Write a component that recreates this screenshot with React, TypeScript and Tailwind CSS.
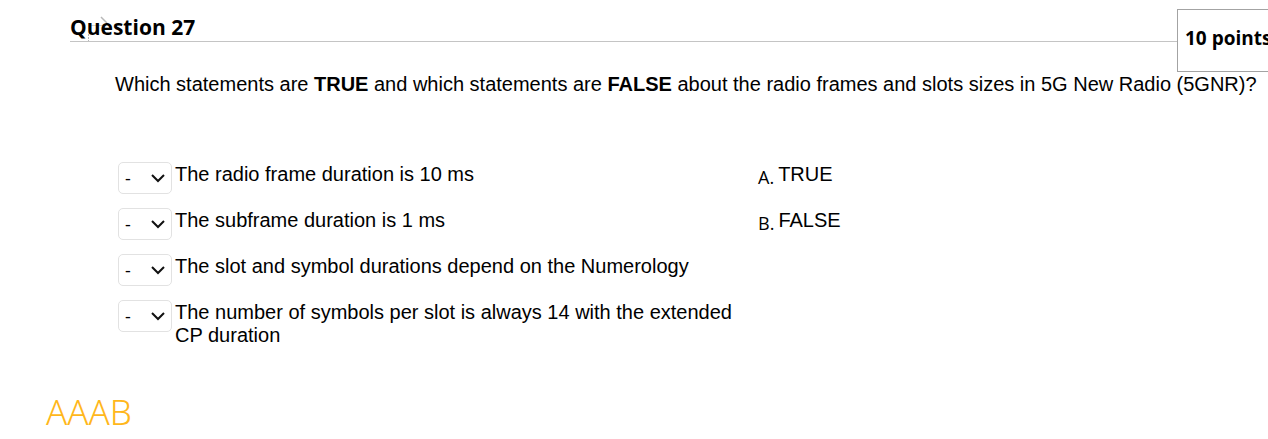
const items = [
  'The radio frame duration is 10 ms',
  'The subframe duration is 1 ms',
  'The slot and symbol durations depend on the Numerology',
  'The number of symbols per slot is always 14 with the extended CP duration',
];
const answers = ['TRUE', 'FALSE'];

export default function App() {
  return (
    <main className="overflow-x-hidden bg-white pb-1 font-['Liberation_Sans',sans-serif] text-[20px] leading-[23px] text-black">
      <header className="relative ml-[70px] h-[42px] border-b border-[#c4c4c4] pt-[14px] font-['Open_Sans',sans-serif] font-bold">
        <svg className="absolute left-4 top-[14px] h-[27px] w-6" viewBox="0 0 24 27" fill="none" stroke="#b8b8b8" aria-hidden="true">
          <path d="M15 3l6 6" strokeWidth="1.5" />
          <path d="M4 11.5h14" stroke="#d4d4d4" />
          <path d="M2.5 20v7" strokeDasharray="2 1" />
        </svg>
        <h2 className="relative text-[21px] leading-[27px]">Question 27</h2>
        <div className="absolute -right-3 top-[9px] flex h-[63px] w-[103px] items-center border border-[#a3a3a3] bg-white pb-1 pl-[7px] text-[19px] whitespace-nowrap">
          10 points
        </div>
      </header>
      <p className="ml-[115px] mt-[31px] whitespace-nowrap">
        Which statements are <b>TRUE</b> and which statements are <b>FALSE</b> about the radio frames and slots sizes in 5G New Radio (5GNR)?
      </p>
      <div className="ml-[118px] mt-[66px] flex">
        <ol className="flex w-[640px] flex-col gap-[13px]">
          {items.map((text, i) => (
            <li key={text} className="flex items-start gap-[3px]">
              <div className="relative h-[33px] w-[54px] shrink-0">
                <select
                  id={`item-${i}`}
                  defaultValue=""
                  className="block h-8 w-full appearance-none rounded-[5px] border border-[#e2e2e2] bg-white pl-[6px] font-['Open_Sans',sans-serif] text-[18px]"
                >
                  <option value="">-</option>
                  <option value="A">A</option>
                  <option value="B">B</option>
                </select>
                <svg className="pointer-events-none absolute right-[6px] top-[10px] h-3 w-4" viewBox="0 0 16 12" fill="none" stroke="#111" strokeWidth="2" aria-hidden="true">
                  <path d="M2 3l6 6 6-6" />
                </svg>
              </div>
              <label htmlFor={`item-${i}`} className="max-w-[570px] pt-px">{text}</label>
            </li>
          ))}
        </ol>
        <ul className="flex flex-col gap-[13px] pt-px">
          {answers.map((a, i) => (
            <li key={a} className="flex h-[33px] items-start gap-1">
              <span className="pt-[3px] font-['Open_Sans',sans-serif] text-[18px]">{'AB'[i]}.</span>
              <span>{a}</span>
            </li>
          ))}
        </ul>
      </div>
      <p className="ml-[46px] mt-[42px] font-['Noto_Sans',sans-serif] text-[35px] font-light leading-[46px] text-[#ffb71b]">AAAB</p>
    </main>
  );
}
